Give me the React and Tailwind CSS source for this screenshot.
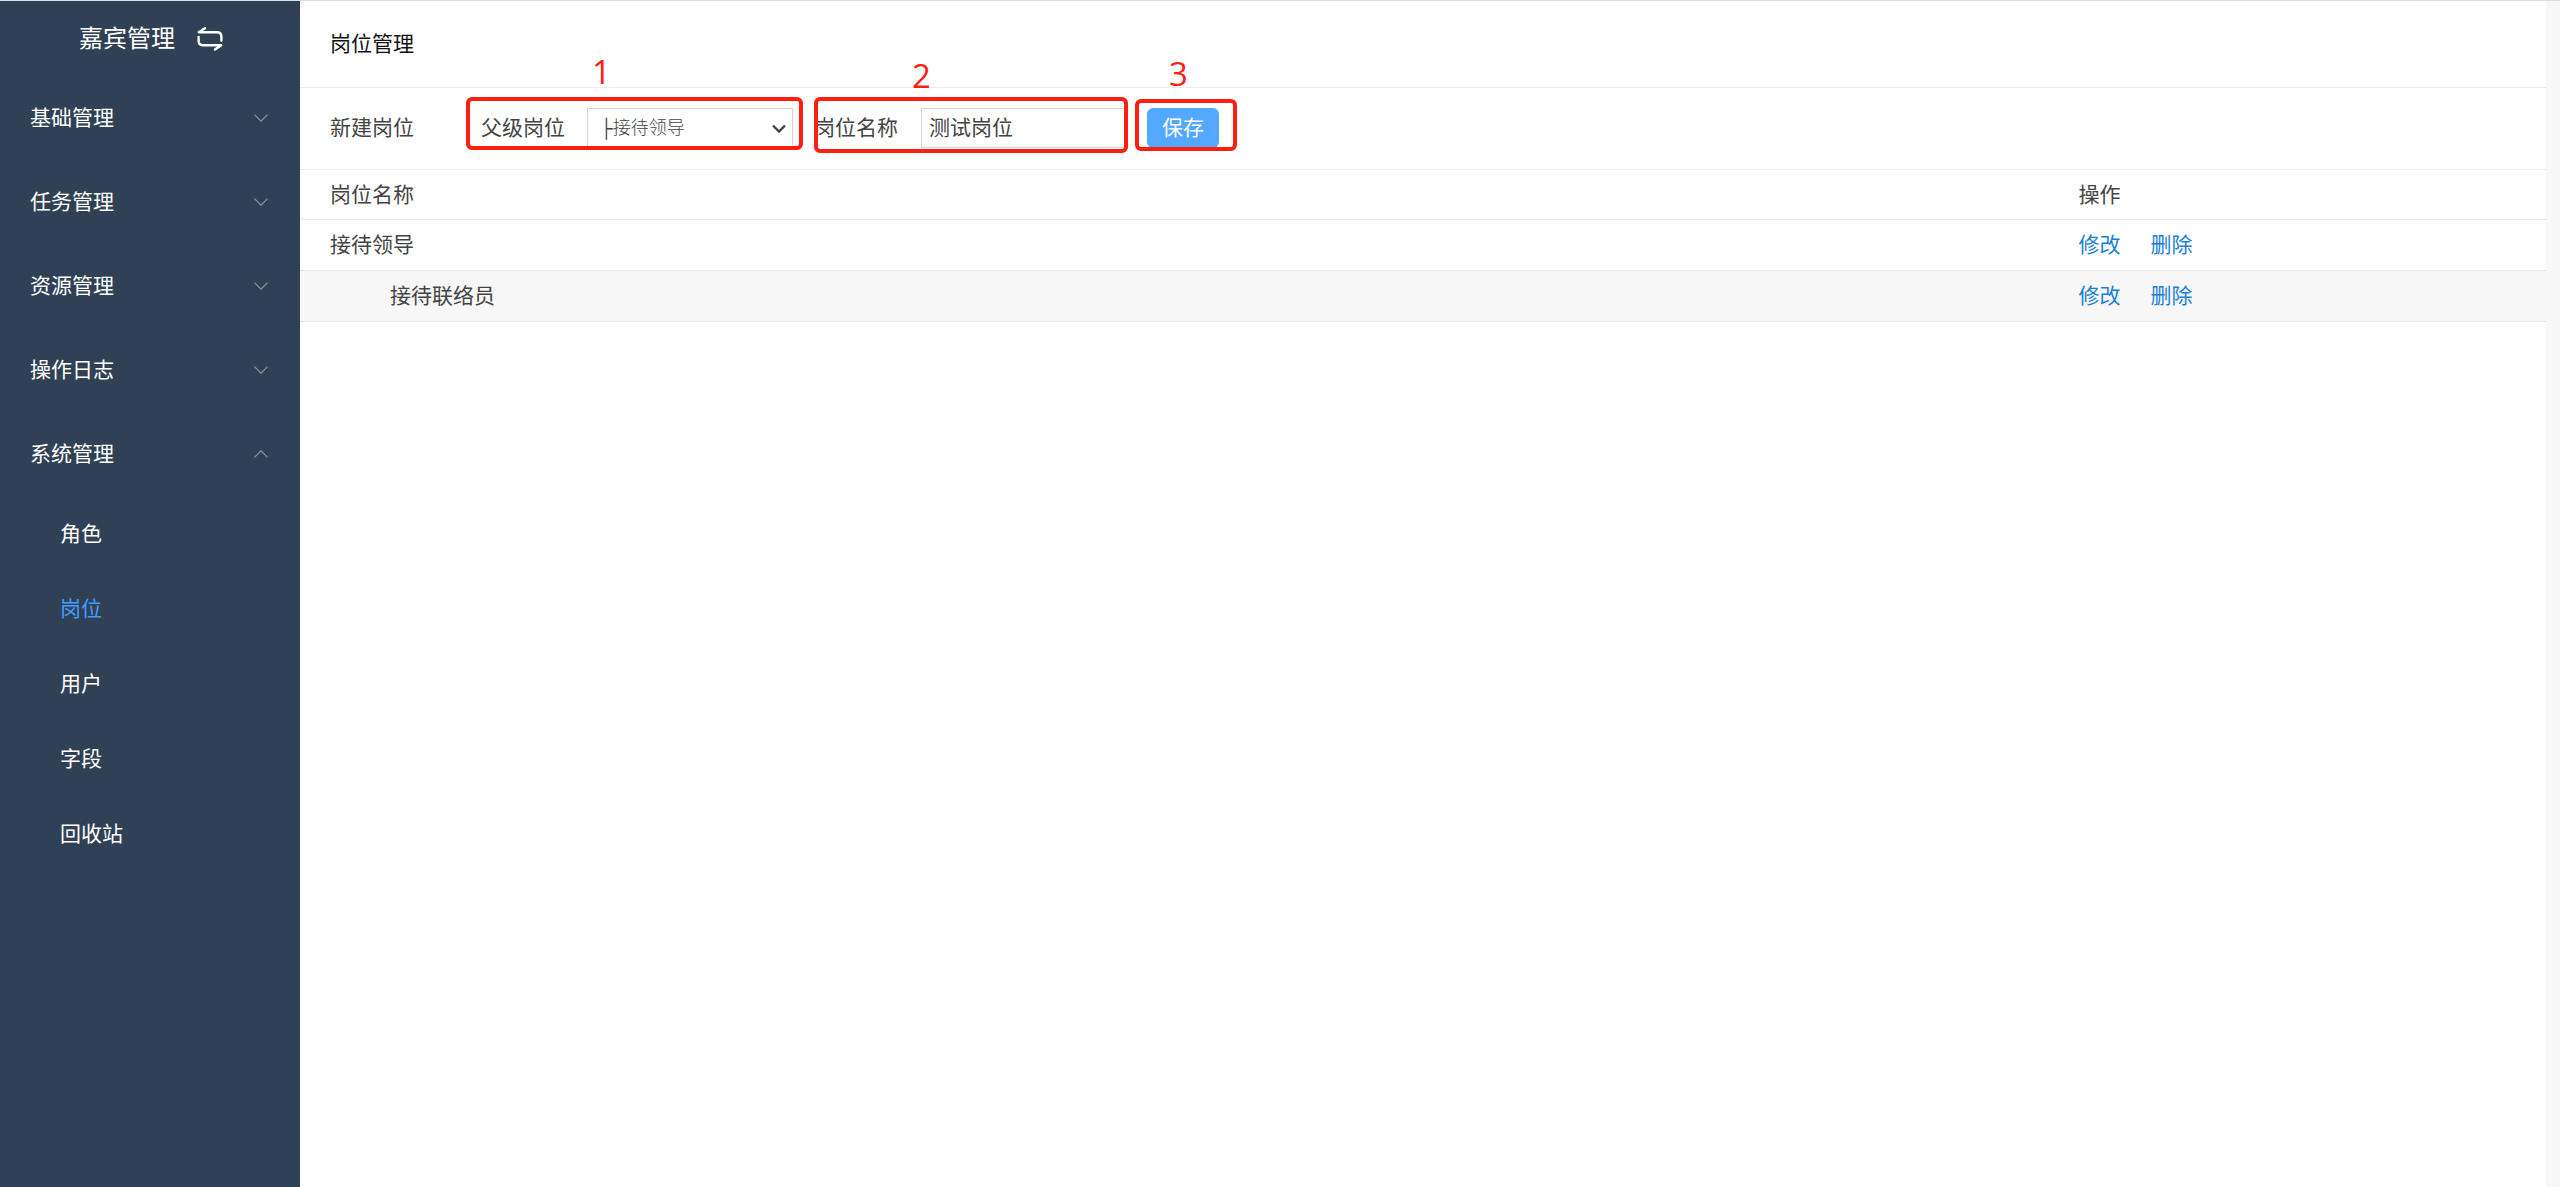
const menus = [
  { name: '基础管理' },
  { name: '任务管理' },
  { name: '资源管理' },
  { name: '操作日志' },
  { name: '系统管理', items: ['角色', '岗位', '用户', '字段', '回收站'] },
];

const posts = [
  { name: '接待领导', child: false },
  { name: '接待联络员', child: true },
];

function SwapIcon() {
  return (
    <svg className="h-6 w-[26px]" viewBox="0 0 26 24" fill="none" stroke="currentColor" strokeWidth="2.4" strokeLinecap="round" strokeLinejoin="round">
      <path d="M8 1.2 L1.8 5.2 H20 Q24.4 5.2 24.4 9.6 V13.5" />
      <path d="M1.6 10 V14 Q1.6 18.2 6 18.2 H24.2 L18 22.6" />
    </svg>
  );
}

function Chevron({ up }) {
  return (
    <svg className="h-2 w-3.5 text-[#909399]" viewBox="0 0 14 8" fill="none" stroke="currentColor" strokeWidth="1.2">
      <path d={up ? 'M0.5 7.3 L7 0.8 L13.5 7.3' : 'M0.5 0.7 L7 7.2 L13.5 0.7'} />
    </svg>
  );
}

function Mark({ number, box, label }) {
  return (
    <>
      <span aria-hidden="true" className={'pointer-events-none absolute rounded-md border-4 border-[#ff1f10] ' + box} />
      <span className={'pointer-events-none absolute font-["Open_Sans",sans-serif] text-[33px] leading-10 text-[#ff1f10] ' + label}>{number}</span>
    </>
  );
}

function Sidebar() {
  return (
    <aside className="w-[300px] shrink-0 bg-[#304156] text-white">
      <div className="flex h-[75px] items-center pl-[79px]">
        <h1 className="text-2xl">嘉宾管理</h1>
        <button type="button" aria-label="切换" className="ml-[22px]">
          <SwapIcon />
        </button>
      </div>
      <nav>
        {menus.map((menu) => (
          <div key={menu.name}>
            <button type="button" aria-expanded={Boolean(menu.items)} className="flex h-[84px] w-full items-center justify-between pr-8 pl-[30px]">
              <span>{menu.name}</span>
              <Chevron up={Boolean(menu.items)} />
            </button>
            {menu.items && (
              <ul>
                {menu.items.map((item) => (
                  <li key={item}>
                    <a href="#" className={'flex h-[75px] items-center pl-[60px] ' + (item === '岗位' ? 'text-[#409eff]' : '')}>
                      {item}
                    </a>
                  </li>
                ))}
              </ul>
            )}
          </div>
        ))}
      </nav>
    </aside>
  );
}

function PostForm() {
  return (
    <form className="flex h-[82px] items-start border-b border-[#ebebeb] pt-5 pl-[30px] leading-10" onSubmit={(e) => e.preventDefault()}>
      <h3 className="w-[151px]">新建岗位</h3>
      <div className="relative flex items-center">
        <label htmlFor="parent" className="w-[106px]">父级岗位</label>
        <div className="relative">
          <select id="parent" className="block h-10 w-[206px] appearance-none border border-[#d6d6d6] bg-white pl-3 text-lg font-light">
            <option>├接待领导</option>
          </select>
          <svg className="pointer-events-none absolute top-4 right-[7px] h-2.5 w-3.5" viewBox="0 0 14 10" fill="none" stroke="currentColor" strokeWidth="2.4">
            <path d="M1 1.5 L7 7.5 L13 1.5" />
          </svg>
        </div>
        <Mark number="1" box="-top-[11px] -left-[15px] h-[53px] w-[337px]" label="-top-[56px] left-[111px]" />
      </div>
      <div className="relative ml-[21px] flex items-center">
        <label htmlFor="name" className="w-[107px]">岗位名称</label>
        <input id="name" type="text" defaultValue="测试岗位" className="block h-10 w-[206px] border border-[#d6d6d6] px-[7px]" />
        <Mark number="2" box="-top-[11px] left-0 h-[56px] w-[314px]" label="-top-[52px] left-[98px]" />
      </div>
      <div className="relative ml-5">
        <button type="submit" className="block h-10 w-[72px] rounded-md bg-[#53a8ff] text-white">保存</button>
        <Mark number="3" box="-top-[9px] -left-3 h-[52px] w-[102px]" label="-top-[54px] left-[22px]" />
      </div>
    </form>
  );
}

function PostTable() {
  return (
    <table className="w-full table-fixed border-separate border-spacing-0 text-left">
      <thead>
        <tr className="h-[50px]">
          <th className="w-[77.85%] border-b border-[#e6e6e6] pl-[30px] font-normal">岗位名称</th>
          <th className="border-b border-[#e6e6e6] pl-[30px] font-normal">操作</th>
        </tr>
      </thead>
      <tbody>
        {posts.map((post) => (
          <tr key={post.name} className="h-[51px] even:bg-[#f7f7f7]">
            <td className={'border-b border-[#e6e6e6] ' + (post.child ? 'pl-[90px]' : 'pl-[30px]')}>{post.name}</td>
            <td className="border-b border-[#e6e6e6] pl-[30px]">
              <div className="flex gap-[30px] text-[#1a7fd8]">
                <a href="#">修改</a>
                <a href="#">删除</a>
              </div>
            </td>
          </tr>
        ))}
      </tbody>
    </table>
  );
}

export default function App() {
  return (
    <div className="flex min-h-screen border-t border-[#dedede] bg-[#f7f7f7] font-['Liberation_Sans','Noto_Sans_CJK_SC',sans-serif] text-[21px] leading-8 text-[#444]">
      <Sidebar />
      <main className="mr-3.5 min-w-0 flex-1 bg-white">
        <h2 className="flex h-[87px] items-center border-b border-[#ebebeb] pl-[30px] text-[#111]">岗位管理</h2>
        <PostForm />
        <PostTable />
      </main>
    </div>
  );
}
